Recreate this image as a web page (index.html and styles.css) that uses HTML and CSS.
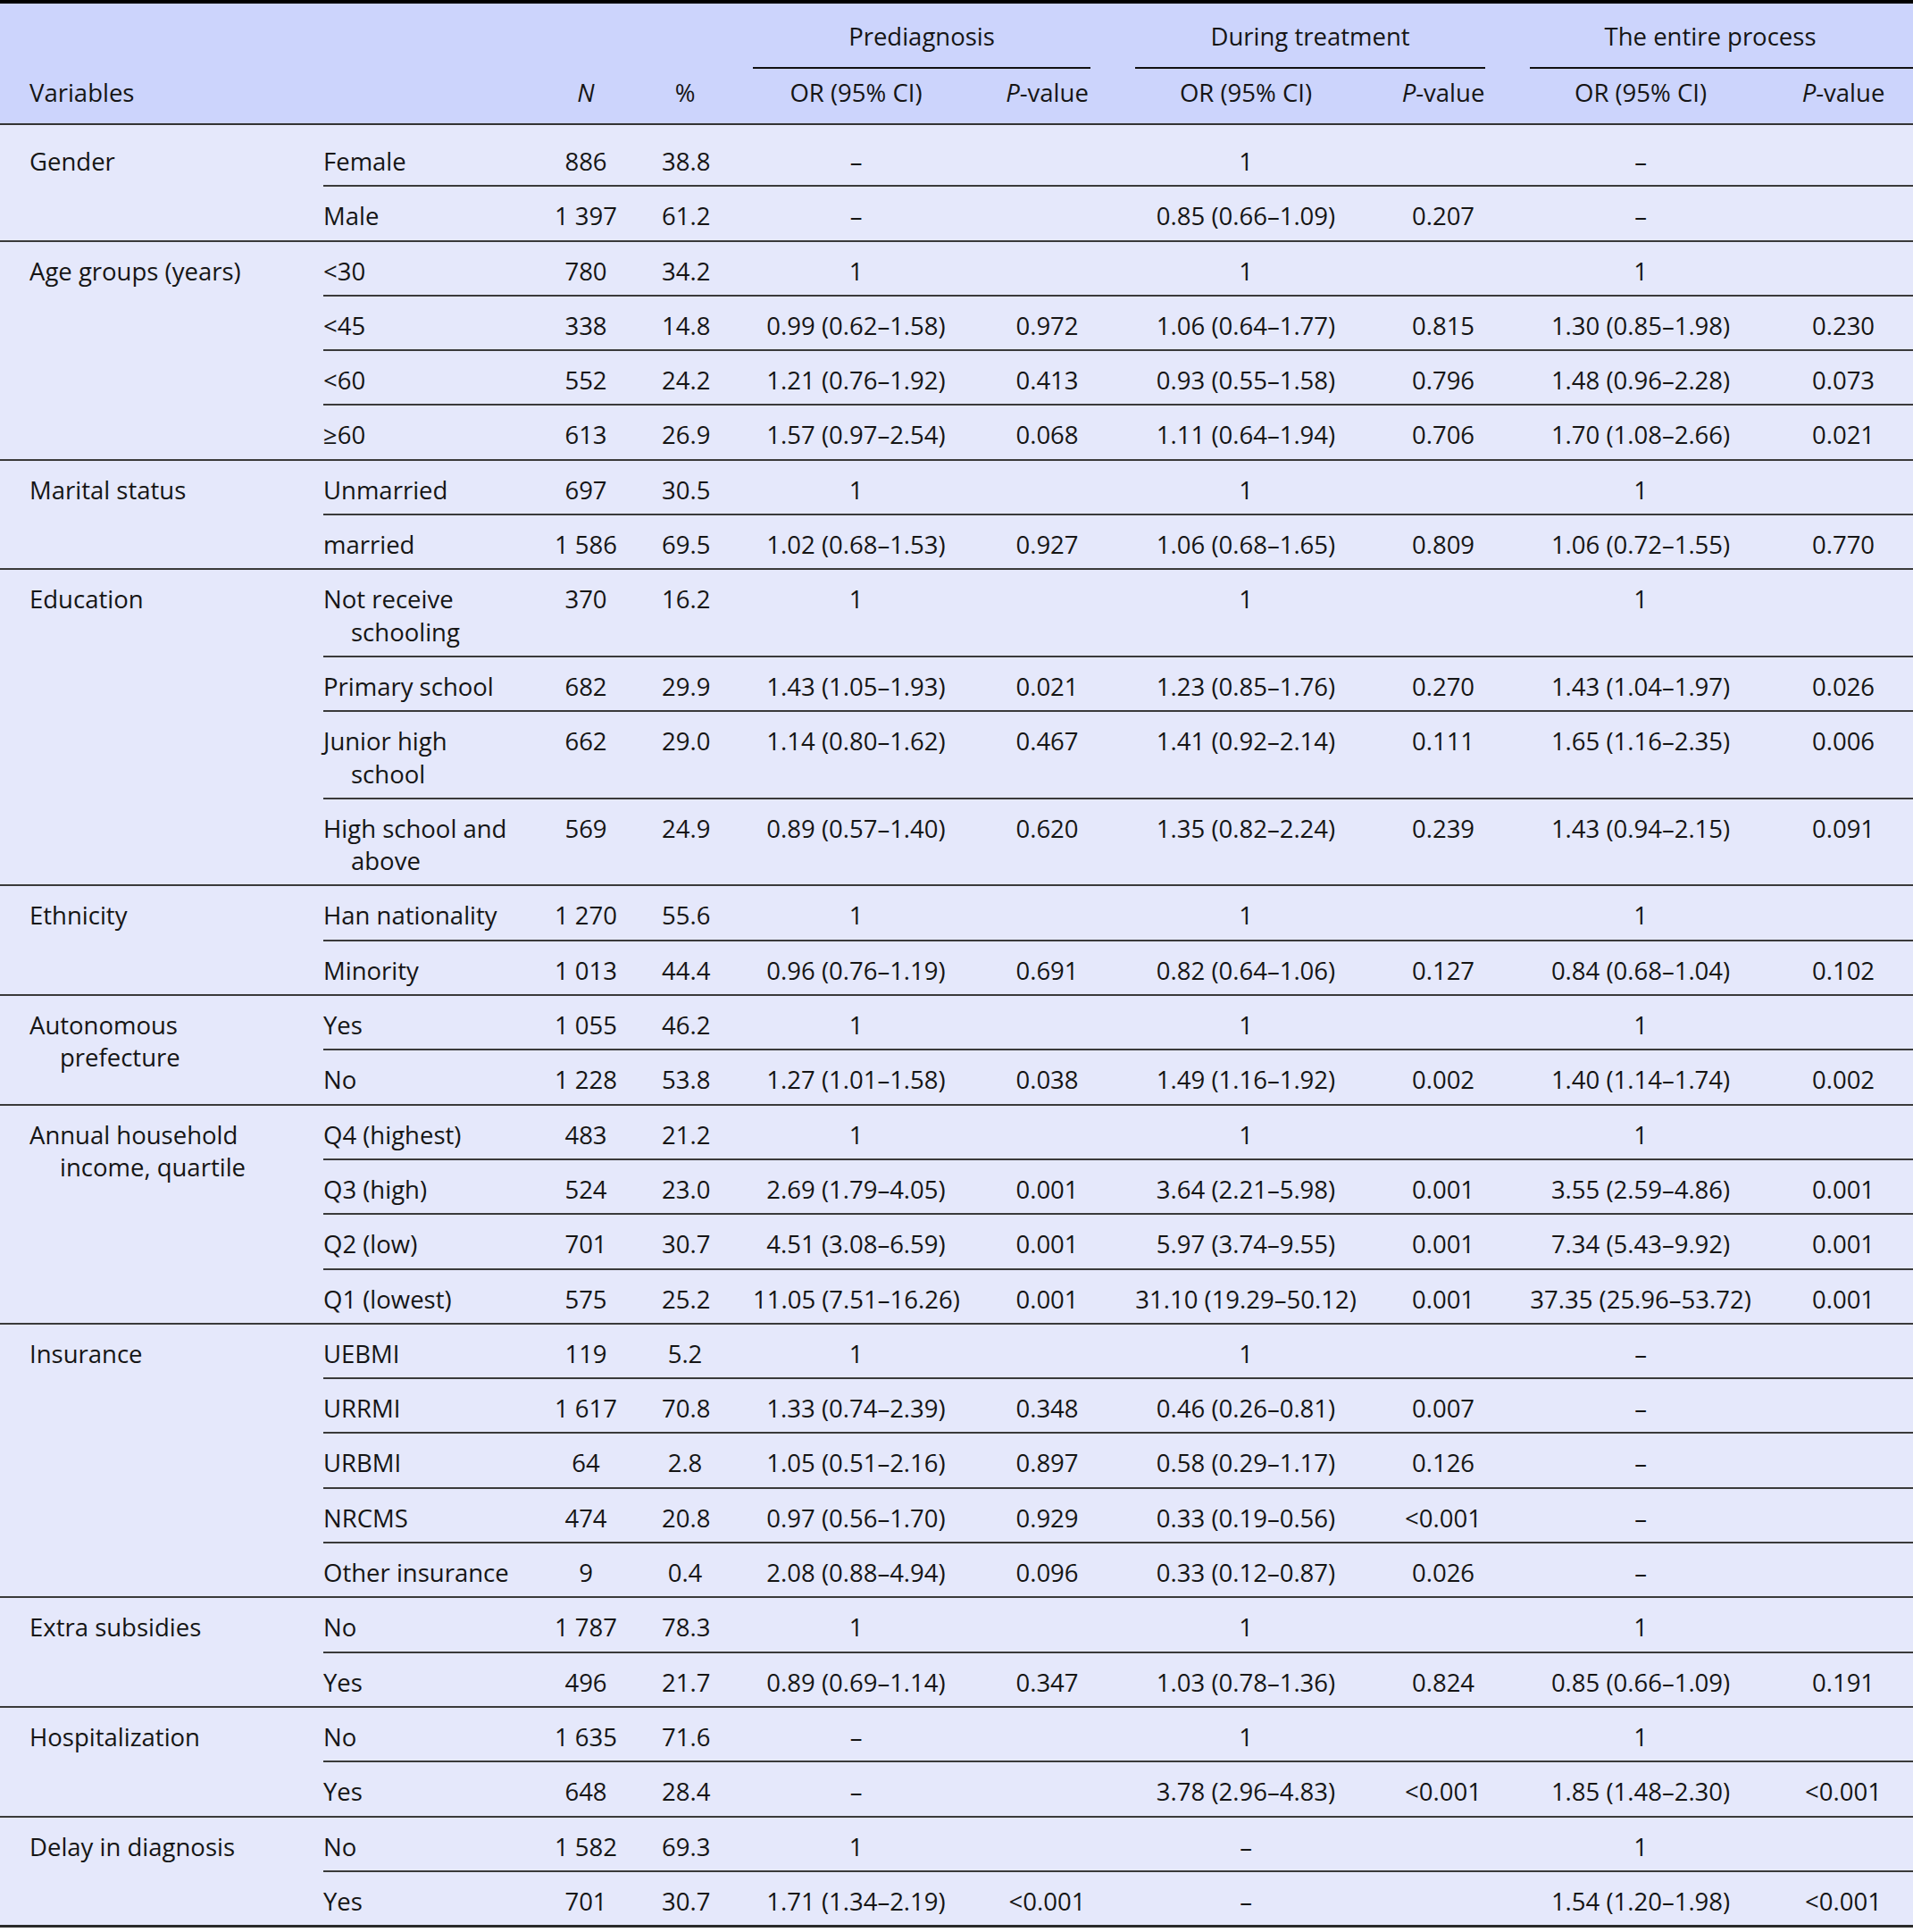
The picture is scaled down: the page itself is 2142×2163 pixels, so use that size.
FILE: index.html
```html
<!DOCTYPE html>
<html>
<head>
<meta charset="utf-8">
<link rel="stylesheet" href="styles.css">
</head>
<body>
<table class="tbl">
<colgroup>
<col class="w-var"><col class="w-lvl"><col class="w-n"><col class="w-pct">
<col class="w-or1"><col class="w-p1"><col class="w-or2"><col class="w-p2"><col class="w-or3"><col class="w-p3">
</colgroup>
<thead>
<tr class="h1">
<th class="var" rowspan="2">Variables</th>
<th class="lvl" rowspan="2"></th>
<th class="num" rowspan="2"><i>N</i></th>
<th class="num" rowspan="2">%</th>
<th class="grp" colspan="2"><div class="ul">Prediagnosis</div></th>
<th class="grp" colspan="2"><div class="ul">During treatment</div></th>
<th class="grp last" colspan="2"><div class="ul">The entire process</div></th>
</tr>
<tr class="h2">
<th class="num">OR (95% CI)</th><th class="num"><i>P</i>-value</th>
<th class="num">OR (95% CI)</th><th class="num"><i>P</i>-value</th>
<th class="num">OR (95% CI)</th><th class="num"><i>P</i>-value</th>
</tr>
</thead>
<tbody>
<tr class="sub first"><td class="var" rowspan="2">Gender</td><td class="lvl">Female</td><td>886</td><td>38.8</td><td>–</td><td></td><td>1</td><td></td><td>–</td><td></td></tr>
<tr class="end"><td class="lvl">Male</td><td>1 397</td><td>61.2</td><td>–</td><td></td><td>0.85 (0.66–1.09)</td><td>0.207</td><td>–</td><td></td></tr>

<tr class="sub"><td class="var" rowspan="4">Age groups (years)</td><td class="lvl">&lt;30</td><td>780</td><td>34.2</td><td>1</td><td></td><td>1</td><td></td><td>1</td><td></td></tr>
<tr class="sub"><td class="lvl">&lt;45</td><td>338</td><td>14.8</td><td>0.99 (0.62–1.58)</td><td>0.972</td><td>1.06 (0.64–1.77)</td><td>0.815</td><td>1.30 (0.85–1.98)</td><td>0.230</td></tr>
<tr class="sub"><td class="lvl">&lt;60</td><td>552</td><td>24.2</td><td>1.21 (0.76–1.92)</td><td>0.413</td><td>0.93 (0.55–1.58)</td><td>0.796</td><td>1.48 (0.96–2.28)</td><td>0.073</td></tr>
<tr class="end"><td class="lvl">≥60</td><td>613</td><td>26.9</td><td>1.57 (0.97–2.54)</td><td>0.068</td><td>1.11 (0.64–1.94)</td><td>0.706</td><td>1.70 (1.08–2.66)</td><td>0.021</td></tr>

<tr class="sub"><td class="var" rowspan="2">Marital status</td><td class="lvl">Unmarried</td><td>697</td><td>30.5</td><td>1</td><td></td><td>1</td><td></td><td>1</td><td></td></tr>
<tr class="end"><td class="lvl">married</td><td>1 586</td><td>69.5</td><td>1.02 (0.68–1.53)</td><td>0.927</td><td>1.06 (0.68–1.65)</td><td>0.809</td><td>1.06 (0.72–1.55)</td><td>0.770</td></tr>

<tr class="sub"><td class="var" rowspan="4">Education</td><td class="lvl">Not receive<br>schooling</td><td>370</td><td>16.2</td><td>1</td><td></td><td>1</td><td></td><td>1</td><td></td></tr>
<tr class="sub"><td class="lvl">Primary school</td><td>682</td><td>29.9</td><td>1.43 (1.05–1.93)</td><td>0.021</td><td>1.23 (0.85–1.76)</td><td>0.270</td><td>1.43 (1.04–1.97)</td><td>0.026</td></tr>
<tr class="sub"><td class="lvl">Junior high<br>school</td><td>662</td><td>29.0</td><td>1.14 (0.80–1.62)</td><td>0.467</td><td>1.41 (0.92–2.14)</td><td>0.111</td><td>1.65 (1.16–2.35)</td><td>0.006</td></tr>
<tr class="end"><td class="lvl">High school and<br>above</td><td>569</td><td>24.9</td><td>0.89 (0.57–1.40)</td><td>0.620</td><td>1.35 (0.82–2.24)</td><td>0.239</td><td>1.43 (0.94–2.15)</td><td>0.091</td></tr>

<tr class="sub"><td class="var" rowspan="2">Ethnicity</td><td class="lvl">Han nationality</td><td>1 270</td><td>55.6</td><td>1</td><td></td><td>1</td><td></td><td>1</td><td></td></tr>
<tr class="end"><td class="lvl">Minority</td><td>1 013</td><td>44.4</td><td>0.96 (0.76–1.19)</td><td>0.691</td><td>0.82 (0.64–1.06)</td><td>0.127</td><td>0.84 (0.68–1.04)</td><td>0.102</td></tr>

<tr class="sub"><td class="var" rowspan="2">Autonomous<br>prefecture</td><td class="lvl">Yes</td><td>1 055</td><td>46.2</td><td>1</td><td></td><td>1</td><td></td><td>1</td><td></td></tr>
<tr class="end"><td class="lvl">No</td><td>1 228</td><td>53.8</td><td>1.27 (1.01–1.58)</td><td>0.038</td><td>1.49 (1.16–1.92)</td><td>0.002</td><td>1.40 (1.14–1.74)</td><td>0.002</td></tr>

<tr class="sub"><td class="var" rowspan="4">Annual household<br>income, quartile</td><td class="lvl">Q4 (highest)</td><td>483</td><td>21.2</td><td>1</td><td></td><td>1</td><td></td><td>1</td><td></td></tr>
<tr class="sub"><td class="lvl">Q3 (high)</td><td>524</td><td>23.0</td><td>2.69 (1.79–4.05)</td><td>0.001</td><td>3.64 (2.21–5.98)</td><td>0.001</td><td>3.55 (2.59–4.86)</td><td>0.001</td></tr>
<tr class="sub"><td class="lvl">Q2 (low)</td><td>701</td><td>30.7</td><td>4.51 (3.08–6.59)</td><td>0.001</td><td>5.97 (3.74–9.55)</td><td>0.001</td><td>7.34 (5.43–9.92)</td><td>0.001</td></tr>
<tr class="end"><td class="lvl">Q1 (lowest)</td><td>575</td><td>25.2</td><td>11.05 (7.51–16.26)</td><td>0.001</td><td>31.10 (19.29–50.12)</td><td>0.001</td><td>37.35 (25.96–53.72)</td><td>0.001</td></tr>

<tr class="sub"><td class="var" rowspan="5">Insurance</td><td class="lvl">UEBMI</td><td>119</td><td>5.2</td><td>1</td><td></td><td>1</td><td></td><td>–</td><td></td></tr>
<tr class="sub"><td class="lvl">URRMI</td><td>1 617</td><td>70.8</td><td>1.33 (0.74–2.39)</td><td>0.348</td><td>0.46 (0.26–0.81)</td><td>0.007</td><td>–</td><td></td></tr>
<tr class="sub"><td class="lvl">URBMI</td><td>64</td><td>2.8</td><td>1.05 (0.51–2.16)</td><td>0.897</td><td>0.58 (0.29–1.17)</td><td>0.126</td><td>–</td><td></td></tr>
<tr class="sub"><td class="lvl">NRCMS</td><td>474</td><td>20.8</td><td>0.97 (0.56–1.70)</td><td>0.929</td><td>0.33 (0.19–0.56)</td><td>&lt;0.001</td><td>–</td><td></td></tr>
<tr class="end"><td class="lvl">Other insurance</td><td>9</td><td>0.4</td><td>2.08 (0.88–4.94)</td><td>0.096</td><td>0.33 (0.12–0.87)</td><td>0.026</td><td>–</td><td></td></tr>

<tr class="sub"><td class="var" rowspan="2">Extra subsidies</td><td class="lvl">No</td><td>1 787</td><td>78.3</td><td>1</td><td></td><td>1</td><td></td><td>1</td><td></td></tr>
<tr class="end"><td class="lvl">Yes</td><td>496</td><td>21.7</td><td>0.89 (0.69–1.14)</td><td>0.347</td><td>1.03 (0.78–1.36)</td><td>0.824</td><td>0.85 (0.66–1.09)</td><td>0.191</td></tr>

<tr class="sub"><td class="var" rowspan="2">Hospitalization</td><td class="lvl">No</td><td>1 635</td><td>71.6</td><td>–</td><td></td><td>1</td><td></td><td>1</td><td></td></tr>
<tr class="end"><td class="lvl">Yes</td><td>648</td><td>28.4</td><td>–</td><td></td><td>3.78 (2.96–4.83)</td><td>&lt;0.001</td><td>1.85 (1.48–2.30)</td><td>&lt;0.001</td></tr>

<tr class="sub"><td class="var" rowspan="2">Delay in diagnosis</td><td class="lvl">No</td><td>1 582</td><td>69.3</td><td>1</td><td></td><td>–</td><td></td><td>1</td><td></td></tr>
<tr class="end last"><td class="lvl">Yes</td><td>701</td><td>30.7</td><td>1.71 (1.34–2.19)</td><td>&lt;0.001</td><td>–</td><td></td><td>1.54 (1.20–1.98)</td><td>&lt;0.001</td></tr>
</tbody>
</table>
</body>
</html>
```
FILE: styles.css
```css
html, body {
  margin: 0;
  padding: 0;
  background: #ffffff;
}
body {
  font-family: "Open Sans", "Noto Sans", sans-serif;
  font-size: 27.5px;
  line-height: 36.3px;
  color: #151515;
}
.tbl {
  width: 2142px;
  table-layout: fixed;
  border-collapse: collapse;
  border-top: 4px solid #000;
  border-bottom: 3px solid #2a2a2a;
}
.w-var { width: 362px; }
.w-lvl { width: 234px; }
.w-n { width: 120px; }
.w-pct { width: 102px; }
.w-or1 { width: 281px; }
.w-p1 { width: 147px; }
.w-or2 { width: 298px; }
.w-p2 { width: 144px; }
.w-or3 { width: 298px; }
.w-p3 { width: 156px; }

th, td {
  padding: 15px 25px 8px 25px;
  text-align: center;
  white-space: nowrap;
  font-weight: normal;
  vertical-align: top;
}
thead th {
  background: #ccd4fc;
  line-height: 36px;
}
thead tr.h2 th, thead th[rowspan] {
  border-bottom: 2px solid #333;
}
thead th[rowspan] {
  vertical-align: bottom;
  padding-bottom: 16px;
}
tr.h1 th.grp {
  padding: 19px 25px 0 25px;
}
tr.h1 th.grp.last {
  padding-right: 0;
}
.ul {
  border-bottom: 2px solid #111;
  padding-bottom: 16px;
}
tr.h1 th.grp.last .ul {
  padding-right: 25px;
}
tr.h2 th {
  padding: 9px 25px 16px 25px;
}
tbody td {
  background: #e5e8fb;
}
th.var, td.var {
  text-align: left;
  padding-left: 67px;
  padding-right: 0;
  text-indent: -34px;
}
th.var {
  text-indent: 0;
  padding-left: 33px;
}
th.lvl, td.lvl {
  text-align: left;
  padding-left: 31px;
  padding-right: 25px;
  text-indent: -31px;
}
tr.first td {
  padding-top: 23px;
}
tr.sub td:not(.var) {
  border-bottom: 2px solid #3a3a3a;
}
tr.end td, td.var {
  border-bottom: 2px solid #3a3a3a;
}
tr.last td {
  border-bottom: 3px solid #2a2a2a;
}
```
